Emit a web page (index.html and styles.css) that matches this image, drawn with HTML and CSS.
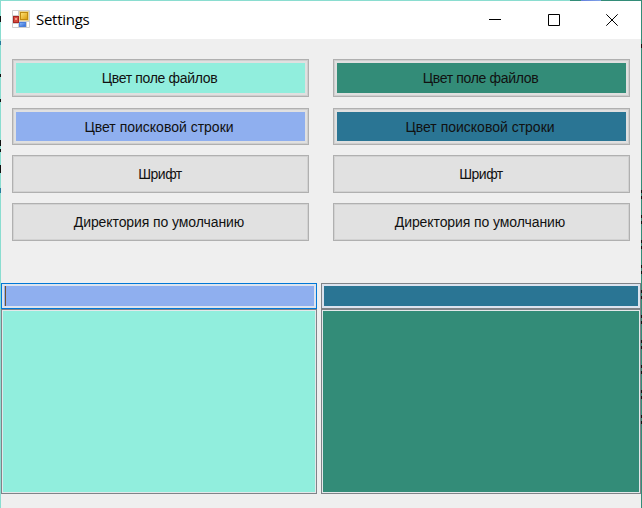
FILE: index.html
```html
<!DOCTYPE html>
<html lang="ru">
<head>
<meta charset="utf-8">
<title>Settings</title>
<link rel="stylesheet" href="styles.css">
</head>
<body>
<div class="desktop">
  <main class="window">
    <header class="titlebar">
      <svg class="app-icon" width="18" height="18" viewBox="0 0 18 18">
        <defs>
          <linearGradient id="gold" x2="1" y2="1"><stop stop-color="#ffe47a"/><stop offset="1" stop-color="#d99a08"/></linearGradient>
          <linearGradient id="blue" x2="1" y2="1"><stop stop-color="#8fbcff"/><stop offset="1" stop-color="#2f68cf"/></linearGradient>
        </defs>
        <rect width="18" height="18" rx="1" fill="#cfcfcf"/>
        <path d="M1 1h5v4H1zM1 14h5v3H1zM15 12h2v5h-2z" fill="#fff"/>
        <rect x="7" y="1" width="10" height="10" fill="#e9d48f"/>
        <rect x="8.500" y="2.500" width="7" height="7" fill="url(#gold)" stroke="#c08a10"/>
        <rect x="1.500" y="6.500" width="5" height="6" fill="#d34a3e" stroke="#a82622"/>
        <rect x="3" y="8" width="2" height="2" fill="#f49a8b"/>
        <rect x="7.500" y="12.500" width="6" height="4" fill="url(#blue)" stroke="#4c7fd9"/>
      </svg>
      <h1 class="title">Settings</h1>
      <div class="controls">
        <svg width="12" height="12" viewBox="0 0 12 12"><path d="M0 5.500H12"/></svg>
        <svg width="12" height="12" viewBox="0 0 12 12"><path d="M.5.5h11v11H.5z"/></svg>
        <svg width="12" height="12" viewBox="0 0 12 12"><path d="M.3.3l11.400 11.400M11.700.3L.3 11.700"/></svg>
      </div>
    </header>
    <section class="options">
      <button class="btn mint"><span class="t-files">Цвет поле файлов</span></button>
      <button class="btn green"><span class="t-files">Цвет поле файлов</span></button>
      <button class="btn blue"><span class="t-search">Цвет поисковой строки</span></button>
      <button class="btn navy"><span class="t-search">Цвет поисковой строки</span></button>
      <button class="btn"><span class="t-font">Шрифт</span></button>
      <button class="btn"><span class="t-font">Шрифт</span></button>
      <button class="btn"><span class="t-dir">Директория по умолчанию</span></button>
      <button class="btn"><span class="t-dir">Директория по умолчанию</span></button>
    </section>
    <section class="previews">
      <div class="field focused blue"><i class="caret"></i></div>
      <div class="field navy"></div>
      <div class="list mint"></div>
      <div class="list green"></div>
    </section>
  </main>
</div>
</body>
</html>
```
FILE: styles.css
```css
* { box-sizing: border-box; }

body { margin: 0; }

.desktop {
  width: 642px;
  height: 508px;
  padding: 1px 1px 0;
  overflow: hidden;
  background:
    linear-gradient(#111, #111) 0 16px / 1px 6px no-repeat,
    linear-gradient(#267c9c, #267c9c) 0 41px / 1px 4px no-repeat,
    linear-gradient(#111, #111) 0 74px / 1px 3px no-repeat,
    linear-gradient(#111, #111) 0 99px / 1px 3px no-repeat,
    linear-gradient(#111, #111) 0 140px / 1px 6px no-repeat,
    linear-gradient(#111, #111) 0 149px / 1px 3px no-repeat,
    linear-gradient(#111, #111) 0 165px / 1px 8px no-repeat,
    linear-gradient(#267c9c, #267c9c) 0 188px / 1px 5px no-repeat,
    linear-gradient(#111, #111) 641px 44px / 1px 4px no-repeat,
    repeating-linear-gradient(#111 0 3px, transparent 3px 6px, #111 6px 9px, transparent 9px 25px) 641px 190px / 1px 240px no-repeat,
    linear-gradient(90deg, #6580dc, #7fa3e8) 581px 0 / 20px 1px no-repeat,
    linear-gradient(90deg, #8addd0 0 570px, #338c78 570px);
}

.window {
  height: 507px;
  background: #efefef;
  font-family: "Liberation Sans", Arial, sans-serif;
}

.titlebar {
  display: flex;
  align-items: center;
  height: 38px;
  padding: 0 23px 0 11px;
  background: #fff;
}

.app-icon { display: block; margin-top: -2px; }

.title {
  margin: -3px 0 0 6px;
  font: 400 15px/20px "Open Sans", "Noto Sans", sans-serif;
  letter-spacing: -0.28px;
  color: #000;
}

.controls { display: flex; gap: 46.500px; margin-left: auto; }
.controls svg { display: block; fill: none; stroke: #000; stroke-width: 1; }

.options {
  display: grid;
  grid-template-columns: 297px 297px;
  grid-template-rows: 38px 38px 38px 38px;
  column-gap: 24px;
  row-gap: 10px;
  padding: 20px 11px 0;
}

.btn {
  display: flex;
  align-items: center;
  justify-content: center;
  padding: 0;
  border: 1px solid #b0b0b0;
  box-shadow: inset 0 0 0 1px #d2d2d2;
  background: #e1e1e1;
  color: #111;
  font: 14px/20px "Liberation Sans", Arial, sans-serif;
  white-space: nowrap;
}

.btn.mint, .btn.green, .btn.blue, .btn.navy {
  box-shadow: inset 0 0 0 1px #cfcfcf, inset 0 0 0 3px #e0e0e0;
}

.btn.blue, .btn.navy { margin-top: 1px; }

.t-files, .t-search, .t-font, .t-dir { display: block; margin-right: 3px; }
.t-files { margin-right: 2px; letter-spacing: -0.33px; }
.t-font { margin-right: 1px; letter-spacing: -0.5px; }
.t-dir { letter-spacing: -0.09px; }

.mint { background: #91eedd; }
.green { background: #338c78; }
.blue { background: #8fafef; }
.navy { background: #2a7594; }

.previews {
  display: grid;
  grid-template-columns: 316px 320px;
  grid-template-rows: 26px 185px;
  column-gap: 4px;
  padding-top: 42px;
}

.field, .list {
  border: 1px solid #7f8388;
  box-shadow: inset 0 0 0 1px #e4e8ea;
}

.field { padding: 2px 0 0 3px; box-shadow: inset 0 0 0 2px #dce3ee; }
.field.focused { border-color: #0078d7; }

.caret { display: block; width: 1px; height: 20px; background: #70522c; }
```
